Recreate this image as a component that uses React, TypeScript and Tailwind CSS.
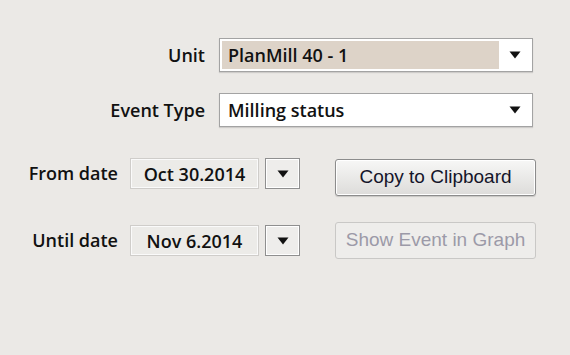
import React from 'react';

const labelFont = { fontFamily: '"Open Sans", "Noto Sans", sans-serif' };

function Caret() {
  return (
    <svg width="12" height="8" viewBox="0 0 12 8" className="block">
      <path d="M0.5 0.5 L11.5 0.5 L6 7.5 Z" fill="#111" />
    </svg>
  );
}

function Dropdown({ value, highlighted }: { value: string; highlighted?: boolean }) {
  return (
    <div className="w-[314px] h-[34px] bg-white border border-[#a3a3a3] shadow-[0_1px_1px_rgba(0,0,0,0.12)] p-[2px] flex items-stretch">
      <div className={`flex-1 flex items-center pl-[6px] ${highlighted ? 'bg-[#ddd3c8]' : ''}`}>
        <span className="text-[18px] font-semibold text-[#111] leading-none">{value}</span>
      </div>
      <div className="w-[31px] flex items-center justify-center">
        <Caret />
      </div>
    </div>
  );
}

function DateField({ value }: { value: string }) {
  return (
    <div className="flex items-center gap-[6px]">
      <div className="w-[129px] h-[31px] border border-[#cfcdca] bg-[#ecebe8] shadow-[inset_0_0_0_1px_#fafafa] flex items-center justify-center">
        <span className="text-[18px] font-semibold text-[#111] leading-none">{value}</span>
      </div>
      <div className="w-[35px] h-[31px] border border-[#8f8f8f] bg-[#eeedeb] shadow-[inset_0_0_0_1px_#ffffff] flex items-center justify-center">
        <Caret />
      </div>
    </div>
  );
}

export default function App() {
  return (
    <div className="w-[570px] h-[355px] bg-[#ebe9e6] overflow-hidden pt-[38px]" style={labelFont}>
      {/* COMBOS */}
      <div className="flex flex-col gap-[21px]">
        <div className="flex items-center">
          <div className="w-[205px] text-right text-[18px] font-semibold text-[#111]">Unit</div>
          <div className="ml-[14px]">
            <Dropdown value="PlanMill 40 - 1" highlighted />
          </div>
        </div>
        <div className="flex items-center">
          <div className="w-[205px] text-right text-[18px] font-semibold text-[#111]">Event Type</div>
          <div className="ml-[14px]">
            <Dropdown value="Milling status" />
          </div>
        </div>
      </div>

      {/* DATES + BOUTONS */}
      <div className="mt-[31px] flex flex-col gap-[29px]">
        <div className="flex items-start">
          <div className="w-[118px] h-[31px] flex items-center justify-end text-[18px] font-semibold text-[#111]">From date</div>
          <div className="ml-[12px]">
            <DateField value="Oct 30.2014" />
          </div>
          <button
            className="ml-[35px] mt-[1px] w-[201px] h-[37px] rounded-[3px] border border-[#8c8c8c] bg-gradient-to-b from-[#f7f7f6] to-[#dddcda] shadow-[0_1px_1px_rgba(0,0,0,0.15),inset_0_0_0_1px_#ffffff] text-[19px] text-[#15152a]"
            style={{ fontFamily: '"Liberation Sans", Arial, sans-serif' }}
          >
            Copy to Clipboard
          </button>
        </div>
        <div className="flex items-start">
          <div className="w-[118px] h-[31px] flex items-center justify-end text-[18px] font-semibold text-[#111]">Until date</div>
          <div className="ml-[12px]">
            <DateField value="Nov 6.2014" />
          </div>
          <button
            className="ml-[35px] -mt-[3px] w-[201px] h-[37px] rounded-[3px] border border-[#c9c8c6] bg-[#eeedeb] text-[19px] text-[#9c9aa8]"
            style={{ fontFamily: '"Liberation Sans", Arial, sans-serif' }}
          >
            Show Event in Graph
          </button>
        </div>
      </div>
    </div>
  );
}
